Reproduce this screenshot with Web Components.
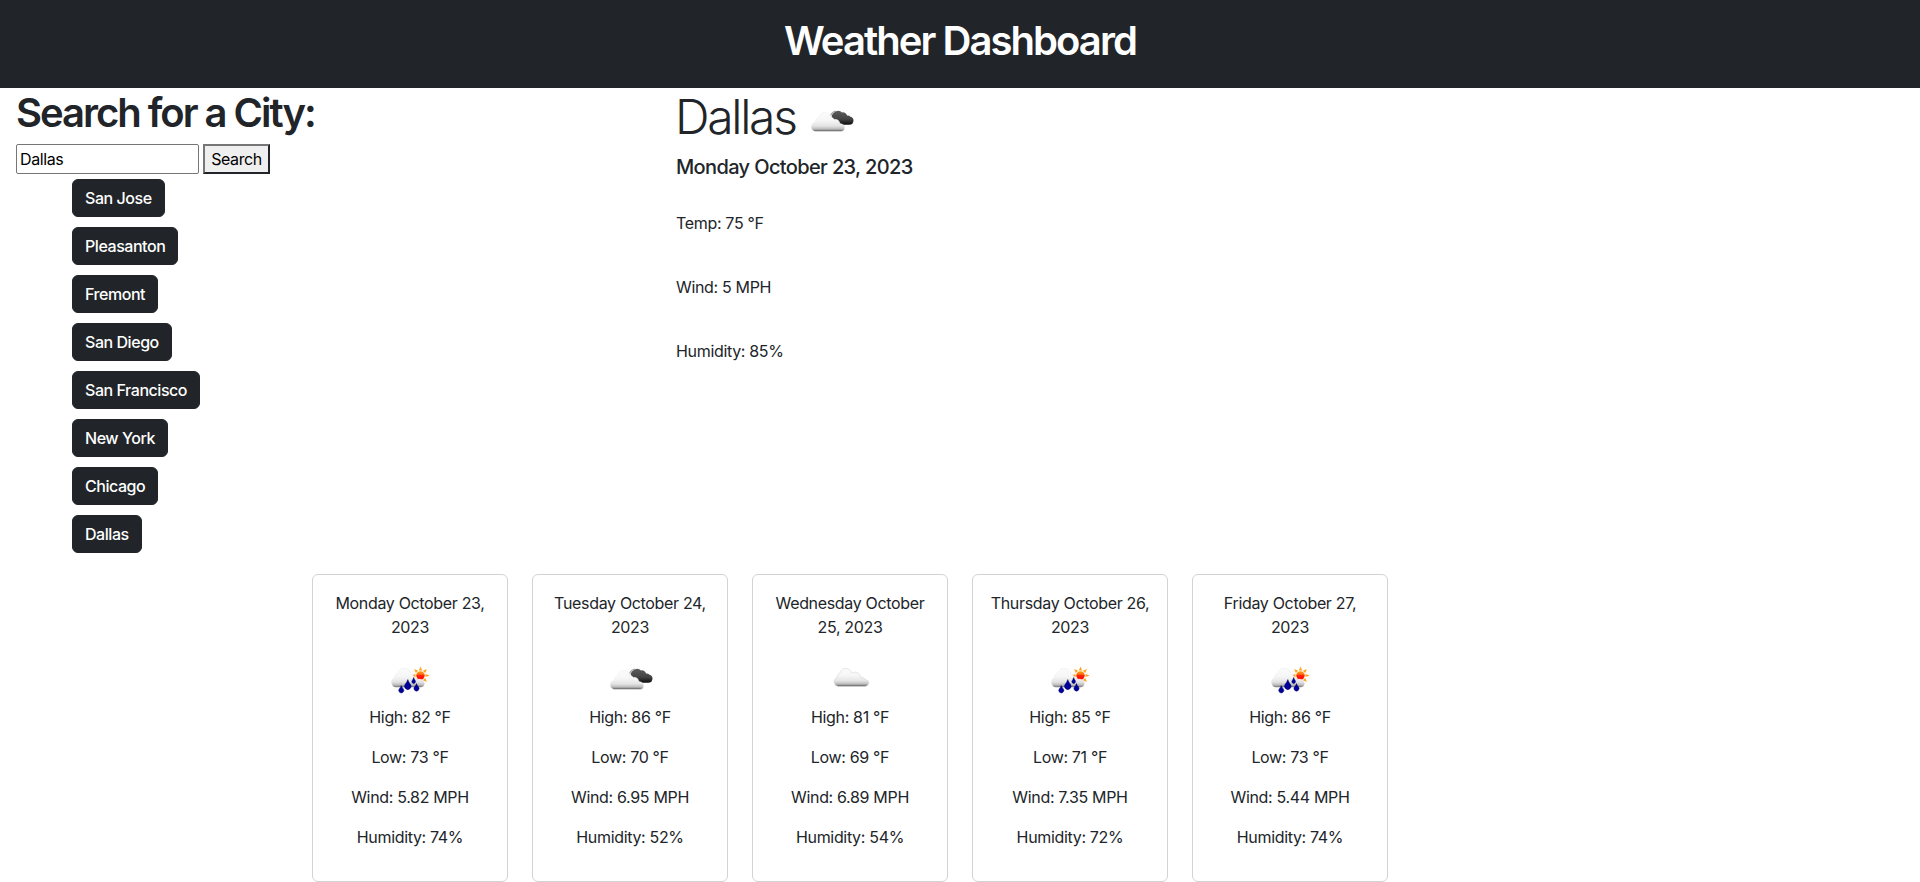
<!DOCTYPE html>
<html lang="en">
<head>
<meta charset="utf-8">
<title>Weather Dashboard</title>
<style>
body{margin:0;background:#fff;color:#212529;font:400 16px/24px Inter,"Liberation Sans",sans-serif;letter-spacing:-.33px}
</style>
</head>
<body>
<weather-app></weather-app>
<script>
const RAYS = [0,45,90,135,180,225,270,315].map(a => `<path d="M33.900 16.500 35.500 12.400l1.600 4.100z" transform="rotate(${a} 35.500 21.500)"/>`).join('');
const ICONS = {
  clouds: {bottom: 35.5, art: `<path d="M27.500 24.500a5 5 0 0 1 1-8.300 5 5 0 0 1 7.500.3 4 4 0 0 1 5 3 3.800 3.800 0 0 1 3.500 1.200 3.700 3.700 0 0 1 3 3.500q0 4.600-4.500 4.600h-6q-3 0-5-1.500-3-.5-4.500-2.800z" fill="url(#d)"/><path d="M24.500 21q0-4.500 5.500-6" fill="none" stroke="#999" stroke-width="1.200"/><path d="M10.500 35.500a4.600 4.600 0 0 1-1.300-9.200q-.2-3.200 3.300-4.800a6.600 6.600 0 0 1 12.700-.3 4.500 4.500 0 0 1 3 2.200 5.500 5.500 0 0 1 5.800 4.200q4.700.7 4.700 4.200 0 3.700-4 3.700z" fill="url(#w)" stroke="#eee" stroke-width=".5"/>`},
  cloud: {bottom: 32.5, art: `<path d="M13.500 32.500a4.700 4.700 0 0 1-1.500-9q0-3.500 3-4.500a6 6 0 0 1 11.500-.5 1 1 0 0 1 1.500.3 5 5 0 0 1 7.500 4.200q4 .3 4.500 2.300 3.800.7 3.800 3.500t-3.800 3.700z" fill="url(#w)" stroke="#d6d6d6" stroke-width=".6"/>`},
  rain: {bottom: 33.5, art: `<g fill="#ffa21a">${RAYS}</g><circle cx="35.500" cy="21.500" r="4.200" fill="url(#s)"/><path d="M12 33.200a4.800 4.800 0 0 1-2.500-9.200q-.2-3.500 3.300-5a6.600 6.600 0 0 1 12.400-.6q3 1 3.300 4.600 3 .3 3.500 2.500 3.300-1.300 5 .5 2.500.5 2.500 3.200 0 4-4 4z" fill="url(#w)" stroke="#e2e2e2" stroke-width=".4"/><g fill="#00009c" stroke="#000058" stroke-width=".4"><path d="M16.300 31.500q1 2.500 2.200 3.500a2.600 2.600 0 1 1-4.400 0q1.200-1 2.200-3.500z"/><path d="M22.800 25.500q1 3 2.800 5a3.300 3.300 0 1 1-5.600 0q1.800-2 2.800-5z"/><path d="M28.700 23.500q.7 2 1.500 2.900a1.900 1.900 0 1 1-3 0q.8-.9 1.500-2.900z"/><path d="M31.500 29.500q1 2.500 2.200 3.600a2.600 2.600 0 1 1-4.400 0q1.200-1.100 2.200-3.600z"/></g>`}
};
const defs = b => `<defs><linearGradient id="w" gradientUnits="userSpaceOnUse" x1="0" y1="${b - 20}" x2="0" y2="${b}"><stop offset="0" stop-color="#fcfcfc"/><stop offset=".45" stop-color="#f6f6f6"/><stop offset=".72" stop-color="#e4e4e4"/><stop offset=".88" stop-color="#bbb"/><stop offset=".97" stop-color="#6a6a6a"/><stop offset="1" stop-color="#777"/></linearGradient><linearGradient id="d" x1="0" y1="0" x2="0" y2="1"><stop offset="0" stop-color="#5c5c5c"/><stop offset=".6" stop-color="#444"/><stop offset="1" stop-color="#0c0c0c"/></linearGradient><linearGradient id="s" x1="0" y1="0" x2="0" y2="1"><stop offset="0" stop-color="#ffa010"/><stop offset=".35" stop-color="#ff7010"/><stop offset=".5" stop-color="#f20"/><stop offset="1" stop-color="#f00"/></linearGradient></defs>`;

class Base extends HTMLElement {
  connectedCallback() {
    if (!this.shadowRoot) this.attachShadow({mode: 'open'}).innerHTML = this.view();
  }
}
customElements.define('weather-icon', class extends Base {
  view() {
    const icon = ICONS[this.getAttribute('kind')];
    return `<style>:host{display:inline-block;width:50px;height:50px}svg{display:block}</style><svg width="50" height="50" viewBox="0 0 50 50">${defs(icon.bottom)}${icon.art}</svg>`;
  }
});
customElements.define('page-banner', class extends Base {
  view() { return `<style>:host{display:block;background:#212529;color:#fff;text-align:center;padding:17px 0 23px}h1{margin:0;font-size:40px;line-height:48px;font-weight:570;letter-spacing:-1.95px}</style><h1><slot></slot></h1>`; }
});
customElements.define('city-button', class extends Base {
  view() { return `<style>:host{display:block;height:38px}button{display:block;font:inherit;font-weight:500;letter-spacing:-.45px;color:#fff;background:#212529;border:1px solid #212529;border-radius:6px;padding:6px 12px;height:38px;line-height:24px}</style><button><slot></slot></button>`; }
});
customElements.define('search-panel', class extends Base {
  view() { return `<style>:host{display:block;padding-left:16px}h1{margin:0;padding:1px 0 7px;font-size:40px;line-height:48px;font-weight:570;letter-spacing:-2.02px}
  .row{display:flex;gap:4px;height:30px}input,.row button{box-sizing:border-box;font:inherit;letter-spacing:-.4px;height:30px;color:#000}input{width:183px;border:1px solid #767676;border-radius:2px;padding:1px 3px;background:#fff}.row button{width:67px;padding:0;border:2px solid #212529;border-top-color:#767676;border-left-color:#767676;background:#efefef;white-space:nowrap}
  .list{display:flex;flex-direction:column;gap:10px;padding:5px 0 0 56px}</style>
  <h1>Search for a City:</h1><div class="row"><input value="Dallas"><button>Search</button></div><div class="list"><slot></slot></div>`; }
});
customElements.define('current-weather', class extends Base {
  view() { return `<style>:host{display:block}.top{display:flex;align-items:center;height:58px}h2{margin:0 0 0 -1px;width:131px;font-size:48px;font-weight:300;line-height:58px;letter-spacing:-2.3px}weather-icon{margin-top:7px}h5{font-size:20px;line-height:24px;font-weight:500;margin:9px 0 32px;letter-spacing:-.63px}p{margin:0 0 40px}</style>
  <div class="top"><h2>Dallas</h2><weather-icon kind="clouds"></weather-icon></div><h5>Monday October 23, 2023</h5><p>Temp: 75 °F</p><p>Wind: 5 MPH</p><p>Humidity: 85%</p>`; }
});
customElements.define('day-card', class extends Base {
  view() {
    const g = n => this.getAttribute(n);
    return `<style>:host{display:block;box-sizing:border-box;width:196px;height:308px;border:1px solid #d3d3d4;border-radius:6px;padding:16px;text-align:center}p{margin:0 0 16px}.date{margin:0 -4px 15px}.ic{height:50px;display:flex;justify-content:center;margin-bottom:1px}</style>
  <p class="date">${g('date').replace('|', '<br>')}</p><div class="ic"><weather-icon kind="${g('kind')}"></weather-icon></div><p>High: ${g('high')} °F</p><p>Low: ${g('low')} °F</p><p>Wind: ${g('wind')} MPH</p><p>Humidity: ${g('humidity')}%</p>`;
  }
});
customElements.define('weather-app', class extends Base {
  view() { return `<style>:host{display:block;height:882px;overflow:hidden}.main{display:grid;grid-template-columns:676px 1fr;height:486px}.cards{display:flex;gap:24px;padding-left:312px}</style>
  <page-banner>Weather Dashboard</page-banner>
  <div class="main"><search-panel>${['San Jose','Pleasanton','Fremont','San Diego','San Francisco','New York','Chicago','Dallas'].map(c => `<city-button>${c}</city-button>`).join('')}</search-panel><current-weather></current-weather></div>
  <div class="cards">
  <day-card date="Monday October 23,|2023" kind="rain" high="82" low="73" wind="5.82" humidity="74"></day-card>
  <day-card date="Tuesday October 24,|2023" kind="clouds" high="86" low="70" wind="6.95" humidity="52"></day-card>
  <day-card date="Wednesday October|25, 2023" kind="cloud" high="81" low="69" wind="6.89" humidity="54"></day-card>
  <day-card date="Thursday October 26,|2023" kind="rain" high="85" low="71" wind="7.35" humidity="72"></day-card>
  <day-card date="Friday October 27,|2023" kind="rain" high="86" low="73" wind="5.44" humidity="74"></day-card>
  </div>`; }
});
</script>
</body>
</html>
